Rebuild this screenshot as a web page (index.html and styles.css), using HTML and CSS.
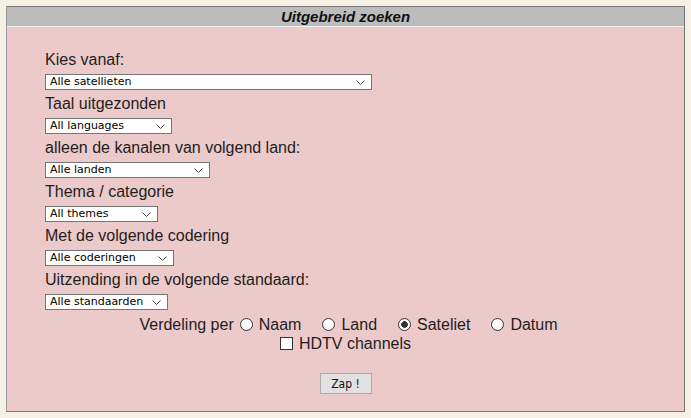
FILE: index.html
```html
<!DOCTYPE html>
<html lang="nl">
<head>
    <meta charset="UTF-8">
    <meta name="viewport" content="width=device-width, initial-scale=1.0">
    <title>Uitgebreid zoeken</title>
    <link rel="stylesheet" href="styles.css">
</head>
<body>

<div class="panel">
    <div class="panel-title">Uitgebreid zoeken</div>

    <form class="panel-body" id="searchForm">
        <div class="field">
            <label for="sat">Kies vanaf:</label>
            <select id="sat" class="sel sel-sat">
                <option>Alle satellieten</option>
            </select>
        </div>

        <div class="field">
            <label for="lang">Taal uitgezonden</label>
            <select id="lang" class="sel sel-lang">
                <option>All languages</option>
            </select>
        </div>

        <div class="field">
            <label for="country">alleen de kanalen van volgend land:</label>
            <select id="country" class="sel sel-country">
                <option>Alle landen</option>
            </select>
        </div>

        <div class="field">
            <label for="theme">Thema / categorie</label>
            <select id="theme" class="sel sel-theme">
                <option>All themes</option>
            </select>
        </div>

        <div class="field">
            <label for="coding">Met de volgende codering</label>
            <select id="coding" class="sel sel-coding">
                <option>Alle coderingen</option>
            </select>
        </div>

        <div class="field">
            <label for="standard">Uitzending in de volgende standaard:</label>
            <select id="standard" class="sel sel-standard">
                <option>Alle standaarden</option>
            </select>
        </div>

        <div class="sort-row">
            <span>Verdeling per</span>
            <label class="opt"><input type="radio" name="sort" value="name"> Naam</label>
            <label class="opt"><input type="radio" name="sort" value="country"> Land</label>
            <label class="opt"><input type="radio" name="sort" value="sat" checked> Sateliet</label>
            <label class="opt"><input type="radio" name="sort" value="date"> Datum</label>
        </div>

        <div class="hd-row">
            <label class="opt"><input type="checkbox" name="hdtv"> HDTV channels</label>
        </div>

        <div class="submit-row">
            <button type="button">Zap !</button>
        </div>
    </form>
</div>

</body>
</html>
```

FILE: styles.css
```css
body {
    margin: 6px;
    background-color: #f4f0e3; /* beige page */
    font-family: "Liberation Sans", Arial, sans-serif;
    color: #1e1e1e;
}

.panel {
    width: 677px;
    border: 1px solid #777;
    border-left-color: #9a9a9a;
    background-color: #eccaca; /* pink body */
}

.panel-title {
    height: 19px;
    line-height: 19px;
    background-color: #bcbcbc;
    border-bottom: 1px solid #f2f2f2;
    text-align: center;
    font-size: 15px;
    font-weight: bold;
    font-style: italic;
    color: #111;
}

.panel-body {
    height: 360px;
    padding: 24px 0 0 38px;
    margin: 0;
}

.field label {
    display: block;
    font-size: 16px;
    line-height: 18px;
}

.sel {
    display: block;
    appearance: none;
    -webkit-appearance: none;
    height: 16px;
    margin: 5px 0;
    padding: 0 16px 0 4px;
    border: 1px solid #767676;
    border-radius: 0;
    background-color: #fff;
    background-image: url("data:image/svg+xml,%3Csvg xmlns='http://www.w3.org/2000/svg' width='9' height='5' viewBox='0 0 9 5'%3E%3Cpath d='M0.5 0.5 L4.5 4.5 L8.5 0.5' fill='none' stroke='%23444' stroke-width='1'/%3E%3C/svg%3E");
    background-repeat: no-repeat;
    background-position: right 6px center;
    font-family: "DejaVu Sans", Verdana, sans-serif;
    font-size: 11px;
    line-height: 14px;
    color: #000;
}

.sel-sat { width: 327px; }
.sel-lang { width: 127px; }
.sel-country { width: 165px; }
.sel-theme { width: 113px; }
.sel-coding { width: 129px; }
.sel-standard { width: 123px; }

.sort-row,
.hd-row {
    display: flex;
    justify-content: center;
    align-items: center;
    margin-left: -38px;
    font-size: 16px;
    line-height: 19px;
}

.sort-row {
    margin-left: -32px;
}

.opt {
    display: flex;
    align-items: center;
    gap: 6px;
    margin-left: 21px;
}

.sort-row .opt:first-of-type {
    margin-left: 6px;
}

.hd-row .opt {
    margin-left: 0;
}

/* classic windows-like radio and checkbox */
.opt input {
    appearance: none;
    -webkit-appearance: none;
    width: 13px;
    height: 13px;
    margin: 0;
    border: 1px solid #333;
    background-color: #fff;
}

.opt input[type="radio"] {
    border-radius: 50%;
}

.opt input[type="radio"]:checked {
    background-image: radial-gradient(circle, #333 0, #333 3px, #fff 3.6px);
}

.opt input[type="checkbox"]:checked {
    background-color: #333;
}

.submit-row {
    margin: 20px 0 0 -38px;
    text-align: center;
}

.submit-row button {
    width: 52px;
    height: 21px;
    padding: 0;
    background-color: #e1e1e1;
    border: 1px solid #adadad;
    font-family: "DejaVu Sans Condensed", "Liberation Sans Narrow", sans-serif;
    font-size: 12px;
    color: #111;
    cursor: pointer;
}

.submit-row button:hover {
    background-color: #e5f1fb;
    border-color: #0078d7;
}
```
